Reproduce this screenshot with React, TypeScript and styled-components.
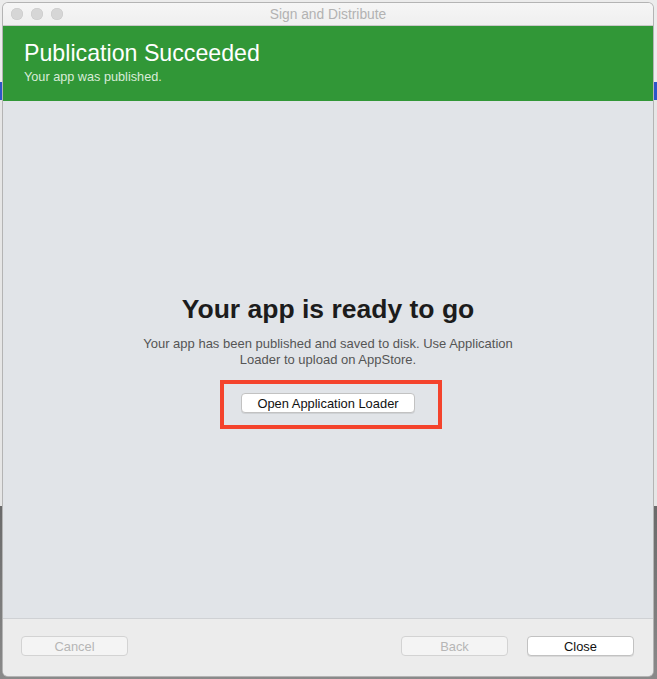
import React from "react";
import styled, { createGlobalStyle } from "styled-components";

const Global = createGlobalStyle`
  html, body { margin: 0; padding: 0; }
  body {
    width: 657px;
    height: 679px;
    overflow: hidden;
    font-family: "Liberation Sans", Arial, sans-serif;
    background: linear-gradient(
      to bottom,
      #ececec 0px, #ececec 82px,
      #2d56c9 82px, #2d56c9 100px,
      #e6e6e6 100px, #e6e6e6 506px,
      #6a6a6a 506px, #8a8a8a 679px
    );
  }
  #root { padding: 3px 0 0 3px; }
`;

const Window = styled.div`
  width: 650px;
  height: 673px;
  display: flex;
  flex-direction: column;
  border-radius: 5px;
  overflow: hidden;
  box-shadow: 0 0 0 1px #b4b4b4;
  background: #ececec;
`;

const TitleBar = styled.div`
  height: 22px;
  flex: none;
  display: flex;
  align-items: center;
  position: relative;
  background: linear-gradient(to bottom, #f6f6f6, #efefef);
  border-bottom: 1px solid #c9c9c9;
`;

const Lights = styled.div`
  display: flex;
  gap: 8px;
  padding-left: 8px;
`;

const Light = styled.span`
  width: 12px;
  height: 12px;
  border-radius: 50%;
  background: #d6d6d6;
  box-shadow: inset 0 0 0 0.5px #c8c8c8;
`;

const WindowTitle = styled.div`
  position: absolute;
  left: 0;
  right: 0;
  top: 0;
  bottom: 0;
  display: flex;
  align-items: center;
  justify-content: center;
  font-size: 13.8px;
  color: #b2b2b2;
  pointer-events: none;
`;

const Banner = styled.div`
  height: 75px;
  flex: none;
  background: #319737;
  padding: 13px 0 0 21px;
  box-sizing: border-box;
`;

const BannerTitle = styled.div`
  font-size: 23.2px;
  color: #ffffff;
  line-height: 28px;
`;

const BannerSub = styled.div`
  font-size: 12.7px;
  color: #d9ecd9;
  margin-top: 3px;
`;

const Content = styled.div`
  flex: 1;
  background: #e1e4e8;
  display: flex;
  flex-direction: column;
  align-items: center;
  justify-content: center;
  padding-top: 4px;
`;

const Heading = styled.h1`
  margin: 0;
  font-size: 26.5px;
  font-weight: bold;
  color: #1c1c1c;
`;

const Message = styled.p`
  margin: 11px 0 0;
  font-size: 13px;
  line-height: 16px;
  color: #555555;
  text-align: center;
  width: 390px;
`;

const Highlight = styled.div`
  margin: 12px 0 0 6px;
  border: 4px solid #f4432c;
  padding: 9px 23px 12px 17px;
`;

const PushButton = styled.button<{ $disabled?: boolean; $width?: number }>`
  width: ${(p) => p.$width ?? 107}px;
  height: 20px;
  box-sizing: border-box;
  border: 1px solid ${(p) => (p.$disabled ? "#d3d3d3" : "#c2c2c2")};
  border-radius: 4px;
  background: ${(p) => (p.$disabled ? "#f4f4f4" : "#ffffff")};
  color: ${(p) => (p.$disabled ? "#b6b6b6" : "#111111")};
  font-family: "Liberation Sans", Arial, sans-serif;
  font-size: 12.9px;
  padding: 0;
  display: flex;
  align-items: center;
  justify-content: center;
  box-shadow: ${(p) => (p.$disabled ? "none" : "0 1px 0 rgba(0,0,0,0.08)")};
`;

const Footer = styled.div`
  height: 58px;
  flex: none;
  border-top: 1px solid #cfd1d4;
  background: #ececec;
  display: flex;
  align-items: flex-start;
  padding: 17px 19px 0 18px;
  box-sizing: border-box;
`;

const Spacer = styled.div`
  flex: 1;
`;

const RightButtons = styled.div`
  display: flex;
  gap: 19px;
`;

export default function App() {
  return (
    <>
      <Global />
      <Window>
        <TitleBar>
          <Lights>
            <Light />
            <Light />
            <Light />
          </Lights>
          <WindowTitle>Sign and Distribute</WindowTitle>
        </TitleBar>
        <Banner>
          <BannerTitle>Publication Succeeded</BannerTitle>
          <BannerSub>Your app was published.</BannerSub>
        </Banner>
        <Content>
          <Heading>Your app is ready to go</Heading>
          <Message>
            Your app has been published and saved to disk. Use Application
            Loader to upload on AppStore.
          </Message>
          <Highlight>
            <PushButton $width={174}>Open Application Loader</PushButton>
          </Highlight>
        </Content>
        <Footer>
          <PushButton $disabled>Cancel</PushButton>
          <Spacer />
          <RightButtons>
            <PushButton $disabled>Back</PushButton>
            <PushButton>Close</PushButton>
          </RightButtons>
        </Footer>
      </Window>
    </>
  );
}
